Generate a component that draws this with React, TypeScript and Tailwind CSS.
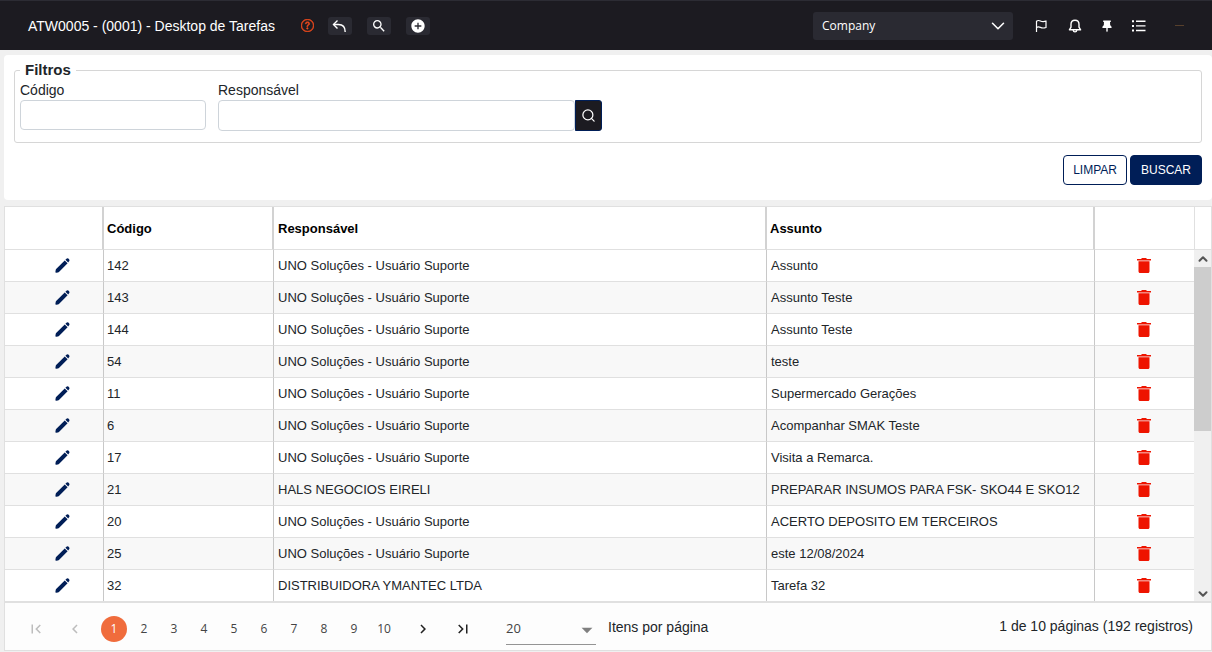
import React from "react";
import { BsQuestionCircle } from "react-icons/bs";
import {
  MdAddCircle,
  MdArrowDropDown,
  MdChevronLeft,
  MdChevronRight,
  MdFirstPage,
  MdLastPage,
  MdSearch,
} from "react-icons/md";
import { ChevronDown, ChevronUp, Search } from "lucide-react";

const UNO = "UNO Soluções - Usuário Suporte";

const tarefas = [
  { codigo: 142, responsavel: UNO, assunto: "Assunto" },
  { codigo: 143, responsavel: UNO, assunto: "Assunto Teste" },
  { codigo: 144, responsavel: UNO, assunto: "Assunto Teste" },
  { codigo: 54, responsavel: UNO, assunto: "teste" },
  { codigo: 11, responsavel: UNO, assunto: "Supermercado Gerações" },
  { codigo: 6, responsavel: UNO, assunto: "Acompanhar SMAK Teste" },
  { codigo: 17, responsavel: UNO, assunto: "Visita a Remarca." },
  { codigo: 21, responsavel: "HALS NEGOCIOS EIRELI", assunto: "PREPARAR INSUMOS PARA FSK- SKO44 E SKO12" },
  { codigo: 20, responsavel: UNO, assunto: "ACERTO DEPOSITO EM TERCEIROS" },
  { codigo: 25, responsavel: UNO, assunto: "este 12/08/2024" },
  { codigo: 32, responsavel: "DISTRIBUIDORA YMANTEC LTDA", assunto: "Tarefa 32" },
];

const paginas = [1, 2, 3, 4, 5, 6, 7, 8, 9, 10];

function UndoIcon() {
  return (
    <svg width="15" height="14" viewBox="0 0 15 14" fill="none" stroke="currentColor" strokeWidth="1.4">
      <path d="M5.5 1.500 1.500 5.500l4 4" />
      <path d="M1.500 5.500H6.500c4.500 0 6.700 2.500 6.700 7.500" />
    </svg>
  );
}

function FlagIcon() {
  return (
    <svg width="14" height="14" viewBox="0 0 14 14" fill="none" stroke="currentColor" strokeWidth="1.2">
      <path d="M2.500 13V2.200C3.700 1.300 5 1.300 6.400 2s3.200.9 5.600.2V8.500c-2.400.8-4 .6-5.600-.1s-2.700-.6-3.900.2" />
    </svg>
  );
}

function BellIcon() {
  return (
    <svg width="14" height="14" viewBox="0 0 14 14" fill="none" stroke="currentColor" strokeWidth="1.4">
      <path d="M7 1.200c2.400 0 4 1.800 4 4.100v2.900l1.600 2.600H1.400L3 8.200V5.300C3 3 4.600 1.200 7 1.200z" strokeLinejoin="round" />
      <path d="M5.200 11c.1 1.300.8 1.900 1.800 1.900s1.700-.6 1.800-1.900" />
    </svg>
  );
}

function PinIcon() {
  return (
    <svg width="10" height="14" viewBox="0 0 10 14" fill="currentColor">
      <path d="M1.200 1.500h7.600v1.400H8L8.200 6.300C9.100 6.800 9.600 7.700 9.600 9H.4c0-1.300.5-2.200 1.400-2.700L2 2.900h-.8zM4.300 9h1.400v3L5 13.300 4.300 12z" />
    </svg>
  );
}

function ListIcon() {
  return (
    <svg width="14" height="14" viewBox="0 0 14 14" fill="currentColor">
      <path d="M0 1.300h2v1.900H0zM0 6h2v1.900H0zM0 10.600h2v1.900H0zM4 1.500h9.500V3H4zM4 6.200h9.500v1.400H4zM4 10.800h9.500v1.500H4z" />
    </svg>
  );
}

function PencilIcon() {
  return (
    <svg width="15" height="15" viewBox="0 0 15 15" fill="currentColor">
      <path d="M9.700 2.400 12.600 5.300 4.200 13.700c-.4.400-.8.600-1.300.7l-1.700.3c-.5.100-.9-.3-.8-.8l.3-1.800c.1-.5.300-.9.700-1.300z" />
      <path d="M10.400 1.700l.8-.8c.8-.8 1.900-.8 2.700 0s.8 1.900 0 2.700l-.7.900z" />
    </svg>
  );
}

function TrashIcon() {
  return (
    <svg width="14" height="15" viewBox="0 0 14 15" fill="currentColor">
      <path d="M4 1 5 0h4l1 1h4v1.400H0V1z" />
      <path d="M1.500 3.200h11v10c0 1-.6 1.800-1.600 1.800H3.100c-1 0-1.600-.8-1.600-1.800z" />
    </svg>
  );
}

function HeaderButton({ label, children }) {
  return (
    <button
      type="button"
      aria-label={label}
      className="flex h-[18px] w-6 items-center justify-center rounded-[3px] bg-[#2a2a32] text-white"
    >
      {children}
    </button>
  );
}

function Header() {
  return (
    <header className="flex h-[50px] items-center justify-between border-t border-[#2c2c34] bg-[#1c1b21] pr-7 pl-7 text-white">
      <div className="flex items-center">
        <h1 className="text-[14px] leading-5">ATW0005 - (0001) - Desktop de Tarefas</h1>
        <a href="#ajuda" aria-label="Ajuda" className="mr-[14px] ml-[26px] text-[#e8491d]">
          <BsQuestionCircle size={13} strokeWidth={0.7} />
        </a>
        <div className="flex items-center gap-[15px]">
          <HeaderButton label="Voltar">
            <UndoIcon />
          </HeaderButton>
          <HeaderButton label="Pesquisar">
            <MdSearch size={16} />
          </HeaderButton>
          <HeaderButton label="Adicionar">
            <MdAddCircle size={16} />
          </HeaderButton>
        </div>
      </div>
      <div className="flex items-center">
        <div className="relative mr-[21px]">
          <select
            aria-label="Empresa"
            className="h-7 w-[200px] appearance-none rounded-[3px] bg-[#2a2a32] pl-[9px] font-['Open_Sans','Noto_Sans',sans-serif] text-[12px] text-white"
          >
            <option>Company</option>
          </select>
          <ChevronDown
            size={22}
            strokeWidth={1.7}
            className="pointer-events-none absolute top-[3px] right-1"
          />
        </div>
        <div className="flex items-center">
          <button type="button" aria-label="Sinalizadores" className="mr-5">
            <FlagIcon />
          </button>
          <button type="button" aria-label="Notificações" className="mr-5">
            <BellIcon />
          </button>
          <button type="button" aria-label="Fixar" className="mr-5">
            <PinIcon />
          </button>
          <button type="button" aria-label="Menu" className="mr-[29px]">
            <ListIcon />
          </button>
          <span className="h-px w-[9px] bg-[#57402c]"></span>
        </div>
      </div>
    </header>
  );
}

function Filtros() {
  return (
    <section className="mt-[5px] ml-1 rounded-[4px] bg-white px-[10px] pt-[5px] pb-[15px]">
      <fieldset className="rounded-[3px] border border-[#d6d6d6] px-[5px] pb-[11px]">
        <legend className="px-[5px] text-[15px] leading-5 font-bold">Filtros</legend>
        <div className="flex gap-3">
          <div className="w-[186px]">
            <label htmlFor="codigo" className="block text-[14px] leading-5">
              Código
            </label>
            <input id="codigo" className="block h-[30px] w-full rounded-[4px] border border-[#ced4da] px-2 text-[14px]" />
          </div>
          <div>
            <label htmlFor="responsavel" className="block text-[14px] leading-5">
              Responsável
            </label>
            <div className="flex">
              <input
                id="responsavel"
                className="h-[31px] w-[357px] rounded-[4px] border border-[#ced4da] px-2 text-[14px]"
              />
              <button
                type="button"
                aria-label="Buscar responsável"
                className="flex h-[31px] w-[27px] items-center justify-center rounded-r-[3px] border border-[#001e57] bg-[#1c1b21] text-white"
              >
                <Search size={15} strokeWidth={2} />
              </button>
            </div>
          </div>
        </div>
      </fieldset>
      <div className="mt-3 flex justify-end gap-[3px] text-[12px]">
        <button type="button" className="h-[30px] rounded-[4px] border border-[#001e57] px-[9px] text-[#001e57]">
          LIMPAR
        </button>
        <button type="button" className="h-[30px] rounded-[4px] border border-[#001e57] bg-[#001e57] px-[10px] text-white">
          BUSCAR
        </button>
      </div>
    </section>
  );
}

function ScrollBar() {
  return (
    <div className="flex w-[17px] flex-col">
      <div className="h-[43px] border-b border-l border-[#e0e0e0]"></div>
      <div className="flex flex-1 flex-col bg-[#f0f0f0] text-[#555]">
        <button type="button" aria-label="Rolar para cima" className="flex h-[17px] items-center justify-center">
          <ChevronUp size={14} strokeWidth={3.5} />
        </button>
        <div className="h-[164px] bg-[#cdcdcd]"></div>
        <button type="button" aria-label="Rolar para baixo" className="mt-auto flex h-[15px] items-center justify-center">
          <ChevronDown size={14} strokeWidth={3.5} />
        </button>
      </div>
    </div>
  );
}

function Tabela() {
  return (
    <div className="flex border-b-2 border-[#e0e0e0]">
      <table className="flex-1 table-fixed border-separate border-spacing-0 text-left text-[13px]">
        <colgroup>
          <col className="w-[99px]" />
          <col className="w-[170px]" />
          <col />
          <col className="w-[328px]" />
          <col className="w-[99px]" />
        </colgroup>
        <thead className="text-black">
          <tr className="h-[43px]">
            <th aria-label="Editar" className="border-r-2 border-b border-r-[#d2d2d2] border-b-[#e0e0e0]"></th>
            <th className="border-r-2 border-b border-r-[#d2d2d2] border-b-[#e0e0e0] px-[3px] pt-px">Código</th>
            <th className="border-r-2 border-b border-r-[#d2d2d2] border-b-[#e0e0e0] px-1 pt-px">Responsável</th>
            <th className="border-r-2 border-b border-r-[#d2d2d2] border-b-[#e0e0e0] px-[3px] pt-px">Assunto</th>
            <th aria-label="Excluir" className="border-b border-[#e0e0e0]"></th>
          </tr>
        </thead>
        <tbody>
          {tarefas.map((t) => (
            <tr key={t.codigo} className="group h-8 last:h-[31px] even:bg-[#f8f8f8]">
              <td className="border-r border-b border-r-[#c8c8c8] border-b-[#e0e0e0] group-last:border-b-0">
                <button type="button" aria-label={"Editar " + t.codigo} className="ml-[50px] block text-[#001e57]">
                  <PencilIcon />
                </button>
              </td>
              <td className="border-r border-b border-r-[#c8c8c8] border-b-[#e0e0e0] px-[3px] group-last:border-b-0">
                {t.codigo}
              </td>
              <td className="border-r border-b border-r-[#c8c8c8] border-b-[#e0e0e0] px-1 group-last:border-b-0">
                {t.responsavel}
              </td>
              <td className="border-r border-b border-r-[#c8c8c8] border-b-[#e0e0e0] px-1 whitespace-nowrap group-last:border-b-0">
                {t.assunto}
              </td>
              <td className="border-b border-[#e0e0e0] pr-px group-last:border-b-0">
                <button type="button" aria-label={"Excluir " + t.codigo} className="mx-auto block text-[#ee1400]">
                  <TrashIcon />
                </button>
              </td>
            </tr>
          ))}
        </tbody>
      </table>
      <ScrollBar />
    </div>
  );
}

function Paginacao() {
  const [pagina, setPagina] = React.useState(1);

  return (
    <nav aria-label="Paginação" className="flex h-[47px] items-center justify-between bg-[#fdfdfd] pt-[5px] pr-[18px] pl-[22px]">
      <div className="flex items-center">
        <button type="button" aria-label="Primeira página" className="mr-[21px] text-[#bdbdbd]">
          <MdFirstPage size={18} />
        </button>
        <button type="button" aria-label="Página anterior" className="mr-[17px] text-[#bdbdbd]">
          <MdChevronLeft size={18} />
        </button>
        <div className="flex gap-1 font-['Open_Sans','Noto_Sans',sans-serif] text-[12px]">
          {paginas.map((p) => (
            <button
              key={p}
              type="button"
              onClick={() => setPagina(p)}
              className={
                p === pagina
                  ? "size-[26px] rounded-full bg-[#f06c3c] text-white"
                  : "size-[26px] rounded-full text-[#444]"
              }
            >
              {p}
            </button>
          ))}
        </div>
        <button type="button" aria-label="Próxima página" className="ml-[17px] text-[#222]">
          <MdChevronRight size={18} />
        </button>
        <button type="button" aria-label="Última página" className="ml-[22px] text-[#222]">
          <MdLastPage size={18} />
        </button>
        <div className="relative ml-[34px]">
          <select
            id="itens"
            className="h-8 w-[90px] appearance-none border-b border-[#949494] font-['Open_Sans','Noto_Sans',sans-serif] text-[13px] text-[#444]"
          >
            <option>20</option>
          </select>
          <MdArrowDropDown
            size={26}
            className="pointer-events-none absolute top-1 -right-1 text-[#808080]"
          />
        </div>
        <label htmlFor="itens" className="ml-3 pb-[3px] text-[14px]">
          Itens por página
        </label>
      </div>
      <span className="pb-[5px] text-[14px]">1 de 10 páginas (192 registros)</span>
    </nav>
  );
}

export default function App() {
  return (
    <div className="bg-[#f0f0f0] pb-px font-['Liberation_Sans',Arial,sans-serif] text-[#212529]">
      <Header />
      <Filtros />
      <main className="mt-[6px] ml-1 border border-[#e0e0e0] bg-white">
        <Tabela />
        <Paginacao />
      </main>
    </div>
  );
}
